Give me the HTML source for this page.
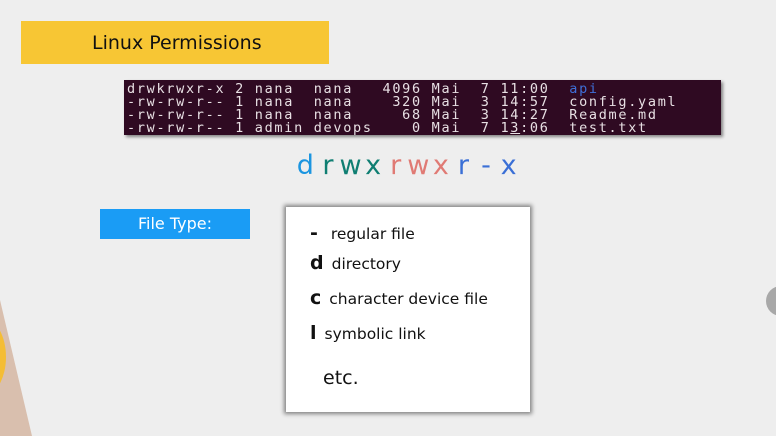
<!DOCTYPE html>
<html><head><meta charset="utf-8"><style>
body{margin:0;width:776px;height:436px;background:#eeeeee;position:relative;overflow:hidden;font-family:"DejaVu Sans","Liberation Sans",sans-serif;}
.a{position:absolute}
.term{left:124px;top:80px;width:597px;height:55px;background:#2f0a22;box-shadow:2px 2px 3px rgba(0,0,0,.45);}
.term pre{margin:0;position:absolute;left:3px;top:3px;font-family:"DejaVu Sans Mono","Liberation Mono",monospace;font-size:13.5px;line-height:12.9px;color:#e8e0e4;letter-spacing:1.7px;}
.perm{top:150px;left:294px;font-size:27px;letter-spacing:0;}
.perm span{display:inline-block;width:22.6px;text-align:center}
.box{left:286px;top:207px;width:244px;height:205px;background:#fff;box-shadow:0 0 4px 2px rgba(0,0,0,.45);}
.it{position:absolute;font-size:15.5px;color:#111;}
.it b{font-size:19px;margin-right:8px}
</style></head><body>
<div class="a" style="left:0;top:300px;width:0;height:0;border-left:32px solid #d9bfae;border-top:136px solid transparent"></div>
<div class="a" style="left:-40px;top:318px;width:46px;height:78px;border-radius:50%;background:#f4bd35"></div>
<div class="a" style="left:766px;top:286px;width:30px;height:30px;border-radius:50%;background:#a8a8a8"></div>
<div class="a" style="left:21px;top:21px;width:308px;height:43px;background:#f7c634"></div>
<div class="a" style="left:92px;top:32px;font-size:19px;color:#111">Linux Permissions</div>
<div class="a term"><pre>drwkrwxr-x 2 nana  nana   4096 Mai  7 11:00  <span style="color:#3f6fd8">api</span>
-rw-rw-r-- 1 nana  nana    320 Mai  3 14:57  config.yaml
-rw-rw-r-- 1 nana  nana     68 Mai  3 14:27  Readme.md
-rw-rw-r-- 1 admin devops    0 Mai  7 1<u>3</u>:06  test.txt</pre></div>
<div class="a perm"><span style="color:#1b95e0">d</span><span style="color:#0f7e72">r</span><span style="color:#0f7e72">w</span><span style="color:#0f7e72">x</span><span style="color:#e07a74">r</span><span style="color:#e07a74">w</span><span style="color:#e07a74">x</span><span style="color:#3a6fd6">r</span><span style="color:#3a6fd6">-</span><span style="color:#3a6fd6">x</span></div>
<div class="a" style="left:100px;top:209px;width:150px;height:30px;background:#1a9cf5;color:#fff;font-size:16px;text-align:center;line-height:30px">File Type:</div>
<div class="a box">
<div class="it" style="left:24px;top:15px"><b>-</b>&nbsp;regular file</div>
<div class="it" style="left:24px;top:45px"><b>d</b>directory</div>
<div class="it" style="left:24px;top:80px"><b>c</b>character device file</div>
<div class="it" style="left:24px;top:115px"><b>l</b>symbolic link</div>
<div class="it" style="left:37px;top:160px;font-size:19px">etc.</div>
</div>
</body></html>
